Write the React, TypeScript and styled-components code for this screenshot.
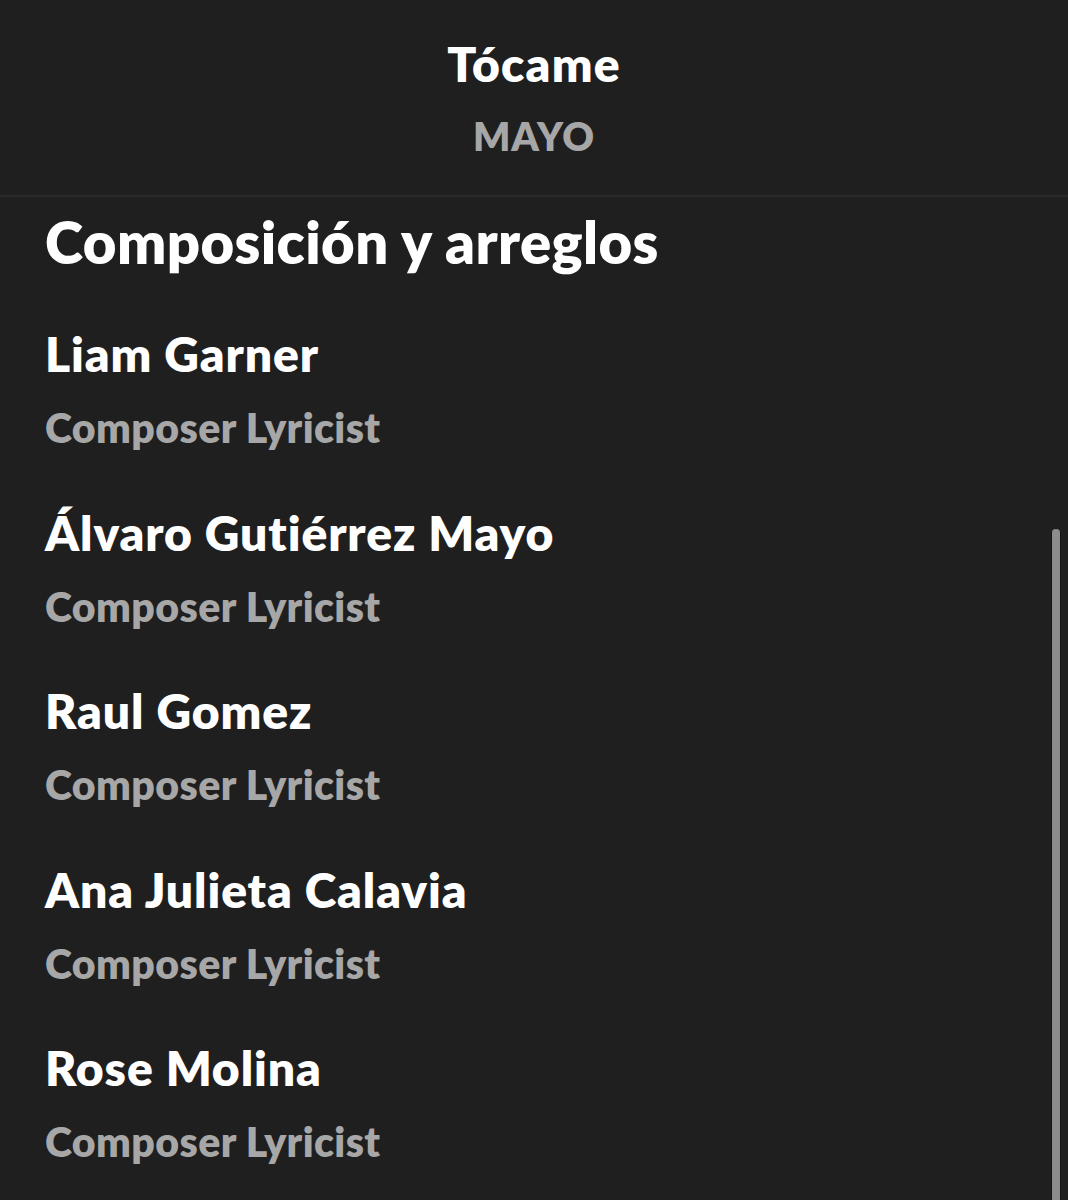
import * as React from "react";
import styled, { createGlobalStyle } from "styled-components";

const GlobalStyle = createGlobalStyle`
  html, body {
    margin: 0;
    padding: 0;
    background-color: #1f1f1f;
  }
  body {
    font-family: Lato, "Noto Sans", "Liberation Sans", sans-serif;
    font-variant-ligatures: none;
    -webkit-font-smoothing: antialiased;
  }
`

const Page = styled.div`
  position: relative;
  width: 1068px;
  height: 1200px;
  overflow: hidden;
  background-color: #1f1f1f;
`

const Header = styled.header`
  height: 197px;
  box-sizing: border-box;
  border-bottom: 2px solid #2a2a2a;
  display: flex;
  flex-direction: column;
  align-items: center;
  padding-top: 37px;
`

const Title = styled.h1`
  margin: 0;
  font-size: 48px;
  line-height: 54px;
  font-weight: 800;
  letter-spacing: 1.2px;
  color: #ffffff;
`

const Subtitle = styled.h2`
  margin: 22px 0 0;
  font-size: 39px;
  line-height: 46px;
  font-weight: 800;
  color: #a7a7a7;
  letter-spacing: 1px;
`

const Content = styled.section`
  padding: 12px 45px 0;
`

const SectionTitle = styled.h3`
  margin: 0 0 52px;
  font-size: 58px;
  line-height: 66px;
  font-weight: 800;
  color: #ffffff;
  letter-spacing: 0.4px;
`

const Credit = styled.div`
  display: flex;
  flex-direction: column;
  height: 178.5px;
`

const Name = styled.div`
  font-size: 48px;
  line-height: 54px;
  font-weight: 800;
  letter-spacing: 0.9px;
  color: #ffffff;
`

const Role = styled.div`
  margin-top: 24px;
  font-size: 41px;
  line-height: 46px;
  font-weight: 800;
  letter-spacing: 0.4px;
  color: #a7a7a7;
`

const ScrollThumb = styled.div`
  position: absolute;
  right: 7px;
  top: 528px;
  width: 8px;
  height: 720px;
  border-radius: 4px;
  background-color: #8c8c8c;
  border: 1px solid #141414;
`

const credits = [
  "Liam Garner",
  "Álvaro Gutiérrez Mayo",
  "Raul Gomez",
  "Ana Julieta Calavia",
  "Rose Molina",
]

export default function App() {
  return (
    <Page>
      <GlobalStyle />
      <Header>
        <Title>Tócame</Title>
        <Subtitle>MAYO</Subtitle>
      </Header>
      <Content>
        <SectionTitle>Composición y arreglos</SectionTitle>
        {credits.map((name) => (
          <Credit key={name}>
            <Name>{name}</Name>
            <Role>Composer Lyricist</Role>
          </Credit>
        ))}
      </Content>
      <ScrollThumb />
    </Page>
  )
}
